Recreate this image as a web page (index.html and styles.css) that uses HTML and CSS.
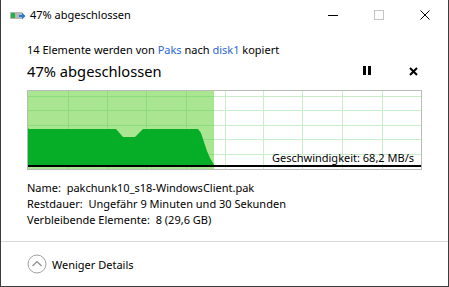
FILE: index.html
```html
<!DOCTYPE html>
<html lang="de">
<head>
  <meta charset="UTF-8">
  <meta name="viewport" content="width=device-width, initial-scale=1.0">
  <title>47% abgeschlossen</title>
  <link rel="stylesheet" href="styles.css">
</head>
<body>
  <div class="copy-window">
    <!-- Title bar -->
    <div class="titlebar">
      <svg class="titlebar-icon" width="16" height="10" viewBox="0 0 16 10">
        <rect x="0" y="1" width="12" height="7" fill="#b8b8b8"/>
        <rect x="1" y="2" width="4" height="5" fill="#1fb53a"/>
        <path d="M9 4h3V1.5L15.5 5 12 8.5V6H9z" fill="#2b78d8"/>
      </svg>
      <span class="titlebar-text">47% abgeschlossen</span>
      <div class="caption-buttons">
        <button class="caption-btn">
          <svg width="10" height="10" viewBox="0 0 10 10"><path d="M0 5.5h10" stroke="#000" stroke-width="1"/></svg>
        </button>
        <button class="caption-btn disabled">
          <svg width="10" height="10" viewBox="0 0 10 10"><rect x="0.5" y="0.5" width="9" height="9" fill="none" stroke="#c4c4c4"/></svg>
        </button>
        <button class="caption-btn">
          <svg width="10" height="10" viewBox="0 0 10 10"><path d="M0.5 0.5l9 9M9.5 0.5l-9 9" stroke="#000" stroke-width="1"/></svg>
        </button>
      </div>
    </div>

    <!-- Main content -->
    <div class="content">
      <div class="status-line">
        14 Elemente werden von <span class="link">Paks</span> nach <span class="link">disk1</span> kopiert
      </div>

      <div class="progress-head">
        <span class="progress-title">47% abgeschlossen</span>
        <button class="head-btn">
          <svg width="8" height="10" viewBox="0 0 8 10"><rect x="0" y="0" width="3" height="9" fill="#000"/><rect x="5" y="0" width="3" height="9" fill="#000"/></svg>
        </button>
        <button class="head-btn">
          <svg width="9" height="9" viewBox="0 0 9 9"><path d="M1 1l7 7M8 1l-7 7" stroke="#000" stroke-width="2"/></svg>
        </button>
      </div>

      <div class="speed-graph">
        <svg width="393" height="78" viewBox="0 0 393 78">
          <!-- done part -->
          <rect x="0" y="0" width="186" height="78" fill="#aae592"/>
          <!-- grid lines over the empty part -->
          <g stroke="#c8eecb" stroke-width="1">
            <path d="M186 5.5H393M186 19.5H393M186 34.5H393M186 48.5H393M186 63.5H393"/>
            <path d="M197.5 0V78M235.5 0V78M274.5 0V78M314.5 0V78M354.5 0V78"/>
          </g>
          <!-- grid lines over the done part -->
          <g stroke="#8edb7b" stroke-width="1">
            <path d="M0 5.5H186M0 19.5H186M0 34.5H186M0 48.5H186M0 63.5H186"/>
            <path d="M40.5 0V78M79.5 0V78M118.5 0V78M158.5 0V78"/>
          </g>
          <!-- speed history -->
          <polygon fill="#06ad26" points="0,37 1,38 88,38 95,46 107,46 115,38 170,38 173,42 176,51 179,60 182,67 185,72 186,74 0,74"/>
          <rect x="0" y="74" width="393" height="2" fill="#000"/>
          <text x="386" y="71" text-anchor="end" class="speed-label">Geschwindigkeit: 68,2 MB/s</text>
        </svg>
      </div>

      <div class="details">
        <div>Name:&nbsp; pakchunk10_s18-WindowsClient.pak</div>
        <div>Restdauer:&nbsp; Ungefähr 9 Minuten und 30 Sekunden</div>
        <div>Verbleibende Elemente:&nbsp; 8 (29,6 GB)</div>
      </div>
    </div>

    <!-- Footer -->
    <div class="footer">
      <svg class="toggle-icon" width="20" height="20" viewBox="0 0 20 20">
        <circle cx="10" cy="10" r="9" fill="none" stroke="#a0a0a0" stroke-width="1"/>
        <path d="M5.5 12L10 7.5 14.5 12" fill="none" stroke="#8a8a8a" stroke-width="1.2"/>
      </svg>
      <span>Weniger Details</span>
    </div>
  </div>
</body>
</html>
```

FILE: styles.css
```css
/* Base */
body {
  margin: 0;
  font-family: "Noto Sans", "Open Sans", sans-serif;
  font-size: 11px;
  color: #000;
  background: #fff;
}

button {
  border: none;
  background: none;
  padding: 0;
  font: inherit;
  cursor: pointer;
}

/* Window frame */
.copy-window {
  width: 449px;
  height: 287px;
  box-sizing: border-box;
  border: 1px solid #3c3c3c;
  border-top: none;
  display: flex;
  flex-direction: column;
  background: #fff;
}

/* Title bar */
.titlebar {
  height: 30px;
  display: flex;
  align-items: center;
  flex-shrink: 0;
}

.titlebar-icon {
  margin-left: 9px;
  margin-top: 1px;
}

.titlebar-text {
  margin-left: 4px;
  line-height: 16px;
}

.caption-buttons {
  margin-left: auto;
  display: flex;
  align-self: stretch;
}

.caption-btn {
  width: 46px;
  height: 30px;
  display: flex;
  align-items: center;
  justify-content: center;
}

/* Content */
.content {
  padding: 0 26px;
}

.status-line {
  margin-top: 12px;
  line-height: 16px;
  white-space: nowrap;
}

.link {
  color: #2b68d4;
}

.progress-head {
  margin-top: 3px;
  height: 20px;
  display: flex;
  align-items: center;
}

.progress-title {
  flex: 1;
  font-size: 14.7px;
  line-height: 20px;
}

.head-btn {
  width: 18px;
  height: 20px;
  display: flex;
  align-items: center;
  justify-content: center;
}

.head-btn + .head-btn {
  margin-left: 28px;
}

/* Speed graph */
.speed-graph {
  margin-top: 9px;
  width: 393px;
  height: 78px;
  border: 1px solid #bababa;
  background: #fff;
}

.speed-graph svg {
  display: block;
}

.speed-label {
  font-family: "Noto Sans", "Open Sans", sans-serif;
  font-size: 11px;
  fill: #000;
}

/* Details */
.details {
  margin-top: 10px;
  line-height: 16px;
  white-space: nowrap;
}

/* Footer */
.footer {
  margin-top: auto;
  height: 44px;
  border-top: 1px solid #dadada;
  display: flex;
  align-items: center;
  padding-left: 26px;
  gap: 5px;
}

.toggle-icon {
  display: block;
}
```
